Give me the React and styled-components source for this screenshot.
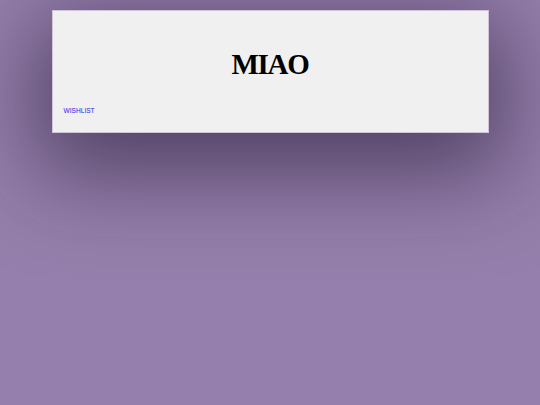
import React from "react";
import styled, { createGlobalStyle } from "styled-components";

const GlobalStyle = createGlobalStyle`
  html, body {
    margin: 0;
    padding: 0;
    background: #957fac;
  }
  body {
    min-height: 100vh;
    font-family: "Liberation Serif", "Times New Roman", serif;
  }
`;

const Page = styled.div`
  min-height: 405px;
  padding-top: 10px;
  box-sizing: border-box;
`;

const Header = styled.header`
  width: 437px;
  height: 123px;
  margin: 0 auto;
  box-sizing: border-box;
  display: flex;
  flex-direction: column;
  padding: 39px 11px 0;
  background: #f0f0f0;
  border: 1px solid #cfc4da;
  box-shadow: 0 25px 90px 15px rgba(25, 15, 40, 0.55);
`;

const Title = styled.h1`
  margin: 0;
  font-family: "Liberation Serif", "Times New Roman", serif;
  font-size: 29px;
  font-weight: bold;
  line-height: 1;
  letter-spacing: -1.3px;
  text-align: center;
  color: #000;
`;

const Nav = styled.nav`
  display: flex;
  gap: 12px;
  margin-top: 29px;
`;

const NavLink = styled.a`
  font-family: "Liberation Sans", Arial, sans-serif;
  font-size: 6.6px;
  line-height: 1;
  color: #2626e6;
  text-decoration: none;
`;

export default function App() {
  return (
    <>
      <GlobalStyle />
      <Page>
        <Header>
          <Title>MIAO</Title>
          <Nav>
            <NavLink href="#">WISHLIST</NavLink>
          </Nav>
        </Header>
      </Page>
    </>
  );
}
